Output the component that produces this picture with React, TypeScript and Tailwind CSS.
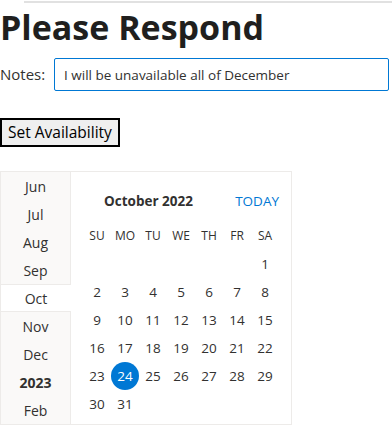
import React from "react";

const months = ["Jun", "Jul", "Aug", "Sep", "Oct", "Nov", "Dec", "2023", "Feb"];
const weekdays = ["SU", "MO", "TU", "WE", "TH", "FR", "SA"];

// October 2022 starts on a Saturday
const cells: (number | null)[] = [
    null, null, null, null, null, null,
    ...Array.from({ length: 31 }, (_, i) => i + 1),
];

const App = () => {
    return (
        <div className="font-['Open_Sans',sans-serif] text-[#323130] bg-white w-[392px] h-[425px] overflow-hidden">
            <div className="ml-[24px] mt-px h-[2px] bg-[#e1e1e1]" />

            <h1 className="mt-[4px] text-[34px] leading-[40px] font-bold text-[#201f1e]">
                Please Respond
            </h1>

            <div className="flex items-center mt-[11px]">
                <label className="text-[15px] text-[#323130] w-[54px]">Notes:</label>
                <input
                    type="text"
                    defaultValue="I will be unavailable all of December"
                    className="w-[335px] h-[33px] border border-[#0078d4] rounded-[2px] px-[9px] text-[13.5px] text-[#323130] outline-none"
                />
            </div>

            <button className="mt-[27px] h-[29px] px-[6px] border-2 border-black bg-[#efefef] text-[15.5px] text-black">
                Set Availability
            </button>

            <div className="mt-[24px] flex w-[292px] h-[254px] border border-[#edebe9]">
                <div className="w-[70px] bg-[#faf9f8] border-r border-[#edebe9] flex flex-col">
                    {months.map((m) => (
                        <div
                            key={m}
                            className={
                                m === "Oct"
                                    ? "h-[28px] -mr-px bg-white border-y border-[#edebe9] flex items-center justify-center text-[14px]"
                                    : m === "2023"
                                    ? "h-[28px] flex items-center justify-center text-[14px] font-bold"
                                    : "h-[28px] flex items-center justify-center text-[14px]"
                            }
                        >
                            {m}
                        </div>
                    ))}
                </div>

                <div className="flex-1 px-[12px] pt-[15px]">
                    <div className="h-[28px] flex items-center justify-between pl-[21px]">
                        <span className="text-[13.5px] font-bold">October 2022</span>
                        <span className="text-[13.5px] text-[#0078d4]">TODAY</span>
                    </div>
                    <div className="mt-[7px] grid grid-cols-7">
                        {weekdays.map((d) => (
                            <div key={d} className="h-[28px] flex items-center justify-center text-[12px]">
                                {d}
                            </div>
                        ))}
                        {cells.map((c, i) => (
                            <div key={i} className="h-[28px] flex items-center justify-center text-[13.5px]">
                                {c === 24 ? (
                                    <span className="w-[28px] h-[28px] rounded-full bg-[#0078d4] text-white flex items-center justify-center">
                                        {c}
                                    </span>
                                ) : (
                                    c
                                )}
                            </div>
                        ))}
                    </div>
                </div>
            </div>
        </div>
    );
};

export default App;
